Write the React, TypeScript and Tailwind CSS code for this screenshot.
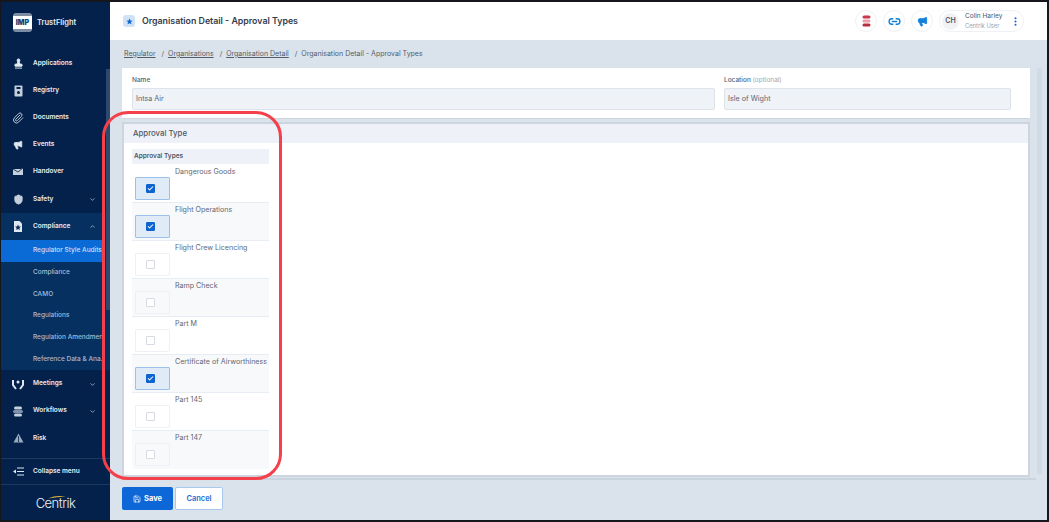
import React from "react";
import { ChevronDown, ChevronUp, Save, Check, Link2, Megaphone, EllipsisVertical, Paperclip, Stamp, Shield } from "lucide-react";

function IconDoc({ star }: { star?: boolean }) {
  return (
    <svg width="12" height="13" viewBox="0 0 12 13">
      <path d="M2 1h5.5L10 3.5V12H2z" fill="#dfe7f1" />
      {star && <path d="M6 4.5l.9 1.9 2 .2-1.5 1.4.4 2L6 9.1l-1.8.9.4-2L3.100 6.600l2-.2z" fill="#0b2a52" />}
    </svg>
  );
}

function NavItem({ label, icon, chevron, className = "pr-[14px]" }: { label: string; icon: React.ReactNode; chevron?: "up" | "down"; className?: string }) {
  return (
    <div className={`flex h-[27.2px] shrink-0 items-center ${className}`}>
      <div className="flex w-[32px] justify-center pl-[2px]">{icon}</div>
      <span className="flex-1 text-[6.500px] font-semibold text-[#e8edf4]">{label}</span>
      {chevron === "down" && <ChevronDown size={7} className="text-[#b8c4d4]" strokeWidth={2.5} />}
      {chevron === "up" && <ChevronUp size={7} className="text-[#b8c4d4]" strokeWidth={2.5} />}
    </div>
  );
}

function SubItem({ label, active }: { label: string; active?: boolean }) {
  return (
    <div className={`flex h-[21.7px] items-center overflow-hidden whitespace-nowrap pl-[32px] text-[6.500px] font-medium ${active ? "bg-[#0a6ad6] text-[#cfe0f4]" : "text-[#a9bdd6]"}`}>
      {label}
    </div>
  );
}

function Sidebar() {
  return (
    <aside className="flex w-[109px] shrink-0 flex-col bg-[#03214a]">
      <div className="flex h-[38px] shrink-0 items-center gap-[5px] pl-[12px] pt-[3px]">
        <div className="flex h-[19px] w-[19px] flex-col justify-center rounded-[3px] border-y-[3px] border-[#7c8da3] bg-white text-center text-[7px] font-black leading-[10px] text-[#123e73]">IMP</div>
        <span className="text-[7.500px] font-semibold text-[#e6ebf2]">TrustFlight</span>
      </div>
      <div className="relative flex min-h-0 flex-1 flex-col pt-[10px]">
        <div className="absolute right-0 top-[29px] h-[241px] w-[4px] bg-[#2d4a6e]" />
        <NavItem label="Applications" icon={<Stamp size={11} fill="#e4eaf2" className="text-[#e4eaf2]" />} />
        <NavItem label="Registry" icon={<svg width="9" height="12" viewBox="0 0 9 12"><rect x="0.500" y="0.500" width="8" height="11" rx="1" fill="#c5cfdc" /><rect x="2.500" y="2" width="4" height="2" fill="#03214a" /><circle cx="4.500" cy="7.500" r="1.500" fill="#03214a" /></svg>} />
        <NavItem label="Documents" icon={<Paperclip size={12} className="text-[#b9c5d4]" />} />
        <NavItem label="Events" icon={<Megaphone size={10} fill="#dfe7f1" className="text-[#dfe7f1]" />} />
        <NavItem label="Handover" icon={<svg width="12" height="10" viewBox="0 0 12 10"><path d="M1 2h8l2-1v7H1z" fill="#c5cfdc" /><path d="M1 2l5 3 5-4" fill="none" stroke="#03214a" strokeWidth="0.800" /></svg>} />
        <NavItem label="Safety" chevron="down" icon={<Shield size={11} fill="#c5cfdc" className="text-[#c5cfdc]" />} />
        <div className="bg-[#05305f] pr-[5px]">
          <NavItem label="Compliance" chevron="up" className="pr-[9px]" icon={<IconDoc star />} />
          <SubItem label="Regulator Style Audits" active />
          <SubItem label="Compliance" />
          <SubItem label="CAMO" />
          <SubItem label="Regulations" />
          <SubItem label="Regulation Amendments" />
          <SubItem label="Reference Data & Ana..." />
        </div>
        <NavItem label="Meetings" chevron="down" icon={<svg width="12" height="11" viewBox="0 0 12 11"><path d="M1 1v5l3 4M11 1v5l-3 4" fill="none" stroke="#dfe7f1" strokeWidth="2" /><circle cx="6" cy="3" r="1.500" fill="#dfe7f1" /></svg>} />
        <NavItem label="Workflows" chevron="down" icon={<svg width="12" height="11" viewBox="0 0 12 11"><rect x="2" y="0.500" width="8" height="3" rx="1.500" fill="#c5cfdc" /><rect x="1" y="4" width="10" height="3" rx="1.500" fill="#7f92aa" /><rect x="2" y="7.500" width="8" height="3" rx="1.500" fill="#c5cfdc" /></svg>} />
        <NavItem label="Risk" icon={<svg width="11" height="10" viewBox="0 0 11 10"><path d="M5.500 0.500L10.500 9.500H0.500z" fill="#9aa9bc" /><path d="M5.500 3v6" stroke="#03214a" strokeWidth="0.800" /></svg>} />
      </div>
      <div className="flex h-[27px] shrink-0 items-center border-y border-[#1c3a60]">
        <div className="flex w-[32px] justify-center pl-[2px]">
          <svg width="11" height="9" viewBox="0 0 11 9"><path d="M4 1h7M4 4.500h7M4 8h7" stroke="#dfe7f1" strokeWidth="1" /><path d="M0 4.500L3 2.500v4z" fill="#dfe7f1" /></svg>
        </div>
        <span className="text-[6.500px] font-semibold text-[#e8edf4]">Collapse menu</span>
      </div>
      <div className="flex h-[35px] shrink-0 flex-col items-center pt-[10px]">
        <svg width="20" height="4" viewBox="0 0 20 4" className="-mb-[3px]"><path d="M2 3.500C8 0.500 14 0.500 20 1.500 14 2 8 2.500 2 3.500z" fill="#e2b33c" /></svg>
        <span className="text-[13px] font-light leading-[15px] tracking-[-0.5px] text-[#eef2f7]">Centrik</span>
      </div>
    </aside>
  );
}

function Circle({ children }: { children: React.ReactNode }) {
  return <div className="flex h-[22px] w-[22px] items-center justify-center rounded-full border border-[#eef1f5] bg-white">{children}</div>;
}

function Header() {
  return (
    <header className="flex h-[38px] shrink-0 items-center bg-white pl-[13px] pr-[23px]">
      <div className="flex h-[12px] w-[12px] items-center justify-center rounded-[3px] bg-[#cfe2f6]">
        <svg width="7" height="7" viewBox="0 0 9 9"><path d="M4.500 0.500l1.200 2.600 2.800.3-2.100 1.900.6 2.800-2.500-1.400L2 8.100l.6-2.800L.5 3.400l2.800-.3z" fill="#1668cf" /></svg>
      </div>
      <h1 className="ml-[7px] flex-1 text-[8.800px] font-semibold text-[#333d4d]">Organisation Detail - Approval Types</h1>
      <div className="flex items-center gap-[6px]">
        <Circle>
          <svg width="9" height="12" viewBox="0 0 9 12"><rect x="0.500" y="0.500" width="8" height="3" rx="1.500" fill="#c8374a" /><rect x="0.500" y="4.500" width="8" height="3" rx="1.500" fill="#e9a0a8" /><rect x="0.500" y="8.500" width="8" height="3" rx="1.500" fill="#b92f42" /></svg>
        </Circle>
        <Circle><Link2 size={13} strokeWidth={2.500} className="text-[#1183d6]" /></Circle>
        <Circle><Megaphone size={11} fill="#1480dc" className="text-[#1480dc]" /></Circle>
        <div className="flex h-[22px] w-[85px] items-center rounded-full border border-[#eef1f5] bg-white pl-[2px]">
          <div className="flex h-[17px] w-[17px] items-center justify-center rounded-full bg-[#f1f2f4] text-[7px] font-semibold text-[#4b5563]">CH</div>
          <div className="ml-[6px] flex-1 leading-none">
            <div className="text-[6.500px] font-normal leading-[9px] text-[#4b5563]">Colin Harley</div>
            <div className="text-[5.800px] leading-[9px] text-[#9aa3af]">Centrik User</div>
          </div>
          <EllipsisVertical size={11} strokeWidth={2.500} className="mr-[2px] text-[#1668cf]" />
        </div>
      </div>
    </header>
  );
}

function Field({ label, value, optional, className }: { label: string; value: string; optional?: boolean; className: string }) {
  return (
    <div className={className}>
      <div className="h-[13px] text-[6.500px] font-medium leading-[10px] text-[#555f6e]">
        {label} {optional && <span className="font-normal text-[#a0a8b4]">(optional)</span>}
      </div>
      <div className="flex h-[22px] items-center rounded-[2px] border border-[#dde3ea] bg-[#eff2f7] pl-[3px] text-[7.200px] text-[#5d6673]">{value}</div>
    </div>
  );
}

const rows = [
  { label: "Dangerous Goods", checked: true },
  { label: "Flight Operations", checked: true },
  { label: "Flight Crew Licencing", checked: false },
  { label: "Ramp Check", checked: false },
  { label: "Part M", checked: false },
  { label: "Certificate of Airworthiness", checked: true },
  { label: "Part 145", checked: false },
  { label: "Part 147", checked: false },
];

function Row({ label, checked, odd }: { label: string; checked: boolean; odd: boolean }) {
  return (
    <div className={`relative flex h-[38px] border-b border-[#e8edf3] pl-[3px] last:border-b-0 ${odd ? "bg-[#f8f9fb]" : "bg-white"}`}>
      <div className={`mt-[12px] flex h-[23px] w-[35px] shrink-0 items-center justify-center rounded-[1px] border pr-[4px] ${checked ? "border-[#9cc0ea] bg-[#e0ebf8]" : "border-[#eef0f3]"}`}>
        <div className={`flex h-[9px] w-[9px] items-center justify-center rounded-[1px] border ${checked ? "border-[#0d63cf] bg-[#0d63cf]" : "border-[#d8dce2] bg-white"}`}>
          {checked && <Check size={7} strokeWidth={3.500} className="text-white" />}
        </div>
      </div>
      <div className="ml-[5px] whitespace-nowrap pt-[1px] text-[7.100px] leading-[11px] text-[#5f6773]">{label}</div>
    </div>
  );
}

function Main() {
  return (
    <main className="flex min-w-0 flex-1 flex-col bg-[#dae3ec]">
      <Header />
      <nav className="flex h-[28px] shrink-0 items-center gap-[4px] pl-[14px] text-[7px] text-[#535d6b]">
        <span className="underline">Regulator</span><span>&nbsp;/</span>
        <span className="underline">Organisations</span><span>&nbsp;/</span>
        <span className="underline">Organisation Detail</span><span>&nbsp;/</span>
        <span>Organisation Detail - Approval Types</span>
      </nav>
      <div className="flex min-h-0 flex-1">
        <div className="ml-[12px] flex w-[908px] shrink-0 flex-col">
          <section className="flex h-[51px] shrink-0 gap-[9px] rounded-[1px] border-b border-[#cdd6df] bg-white px-[10px] pt-[7px]">
            <Field label="Name" value="Intsa Air" className="w-[583px]" />
            <Field label="Location" value="Isle of Wight" optional className="w-[287px]" />
          </section>
          <section className="mt-[3px] flex h-[355px] shrink-0 flex-col border-2 border-[#cdd6df] bg-white">
            <div className="flex h-[19px] shrink-0 items-center bg-[#eef2f8] pl-[9px] text-[7.800px] font-medium text-[#4e5866]">Approval Type</div>
            <div className="ml-[8px] mt-[6px] w-[137px]">
              <div className="flex h-[15px] items-center bg-[#eef2f8] pl-[2px] pt-[1px] text-[6.500px] font-semibold text-[#4e5866]">Approval Types</div>
              <div className="pt-[1px]">
                {rows.map((r, i) => <Row key={r.label} {...r} odd={i % 2 === 1} />)}
              </div>
            </div>
          </section>
          <div className="mt-[1px] h-[2px] w-[914px] shrink-0 bg-[#c9d4de]" />
          <div className="mt-[7px] flex gap-[2px]">
            <button className="flex h-[23px] w-[51px] items-center justify-center gap-[3px] rounded-[2px] bg-[#0d67d6] text-[7.500px] font-bold text-white"><Save size={8} />Save</button>
            <button className="h-[23px] w-[48px] rounded-[2px] border border-[#a8c8ee] bg-white text-[7.500px] font-semibold text-[#1b6fd6]">Cancel</button>
          </div>
        </div>
        <div className="ml-[7px] h-[406px] w-[5px] shrink-0 bg-[#d0dbe5]" />
      </div>
    </main>
  );
}

export default function App() {
  return (
    <div className="relative h-[522px] w-[1049px] overflow-hidden bg-[#15171c] pb-[2px] pl-[1px] pr-[2px] pt-[2px] font-['Inter',sans-serif]">
      <div className="flex h-full">
        <Sidebar />
        <Main />
      </div>
      <div className="pointer-events-none absolute left-[102px] top-[111px] h-[369px] w-[180px] rounded-[26px] border-[3px] border-[#f4404a]" />
    </div>
  );
}
